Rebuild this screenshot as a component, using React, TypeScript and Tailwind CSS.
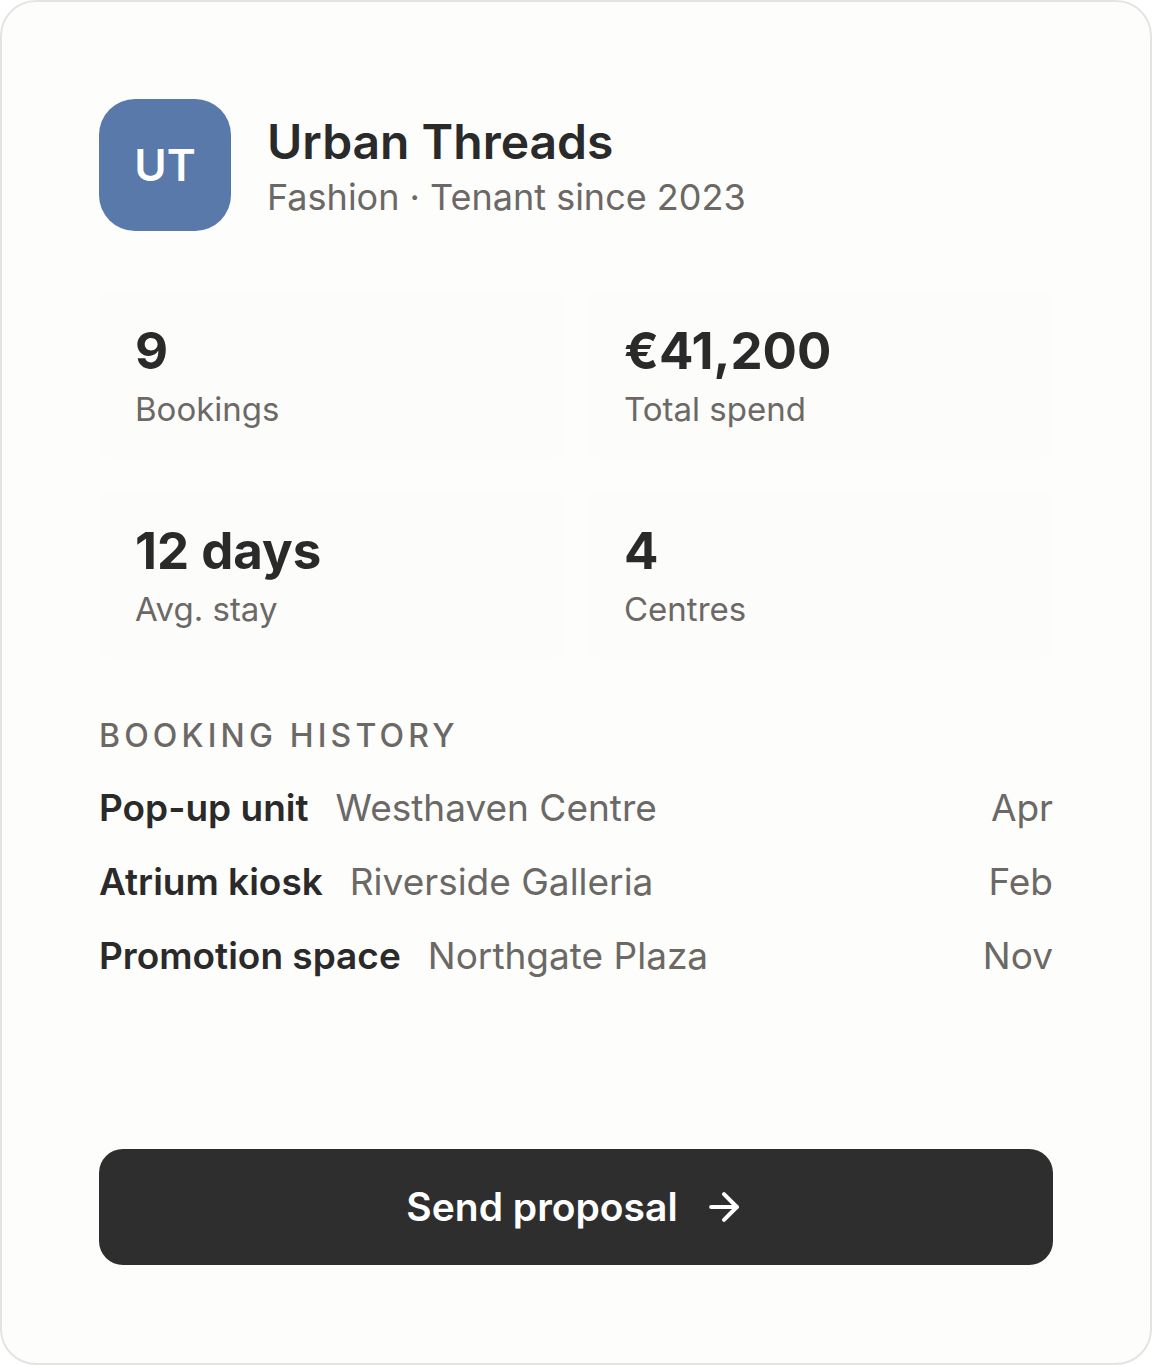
import { ArrowRight } from 'lucide-react';

const stats = [
    { value: '9', label: 'Bookings' },
    { value: '€41,200', label: 'Total spend' },
    { value: '12 days', label: 'Avg. stay' },
    { value: '4', label: 'Centres' },
];

const history = [
    { unit: 'Pop-up unit', centre: 'Westhaven Centre', month: 'Apr' },
    { unit: 'Atrium kiosk', centre: 'Riverside Galleria', month: 'Feb' },
    { unit: 'Promotion space', centre: 'Northgate Plaza', month: 'Nov' },
];

export default function App() {
    return (
        <div className="w-[1152px] h-[1365px] bg-white font-['Inter',sans-serif] text-[#2a2a2a]">
            <div className="h-full flex flex-col rounded-[36px] border-2 border-[#e4e4e2] bg-[#fdfdfb] px-[97px] pt-[97px] pb-[98px]">
                {/* Header */}
                <header className="flex items-center gap-[36px]">
                    <div className="size-[132px] shrink-0 rounded-[36px] bg-[#5879a9] flex items-center justify-center text-white text-[44px] font-semibold">
                        UT
                    </div>
                    <div className="pt-[4px]">
                        <h1 className="text-[48px] leading-[58px] font-semibold">Urban Threads</h1>
                        <p className="mt-[2px] text-[36px] leading-[48px] text-[#6b6866]">Fashion · Tenant since 2023</p>
                    </div>
                </header>

                {/* Stats */}
                <div className="mt-[59px] grid grid-cols-2 gap-x-[24px] gap-y-[30px]">
                    {stats.map((s) => (
                        <div key={s.label} className="rounded-2xl bg-[#fcfcfa] px-[36px] pt-[30px] pb-[28px]">
                            <div className="text-[51px] leading-[62px] font-bold">{s.value}</div>
                            <div className="mt-[4px] text-[33px] leading-[46px] text-[#6b6866]">{s.label}</div>
                        </div>
                    ))}
                </div>

                {/* Booking history */}
                <section className="mt-[56px]">
                    <h2 className="text-[32px] leading-[40px] font-medium tracking-[0.13em] text-[#6b6866]">BOOKING HISTORY</h2>
                    <ul className="mt-[28px] flex flex-col gap-[26px]">
                        {history.map((h) => (
                            <li key={h.unit} className="flex items-baseline text-[37px] leading-[48px]">
                                <span className="font-semibold">{h.unit}</span>
                                <span className="ml-[27px] text-[#6b6866]">{h.centre}</span>
                                <span className="ml-auto text-[#6b6866]">{h.month}</span>
                            </li>
                        ))}
                    </ul>
                </section>

                {/* Action */}
                <button className="mt-auto h-[116px] w-full rounded-[24px] bg-[#2e2e2e] text-white flex items-center justify-center gap-[24px]">
                    <span className="text-[39px] font-semibold">Send proposal</span>
                    <ArrowRight className="size-[44px]" strokeWidth={2.2} />
                </button>
            </div>
        </div>
    );
}
